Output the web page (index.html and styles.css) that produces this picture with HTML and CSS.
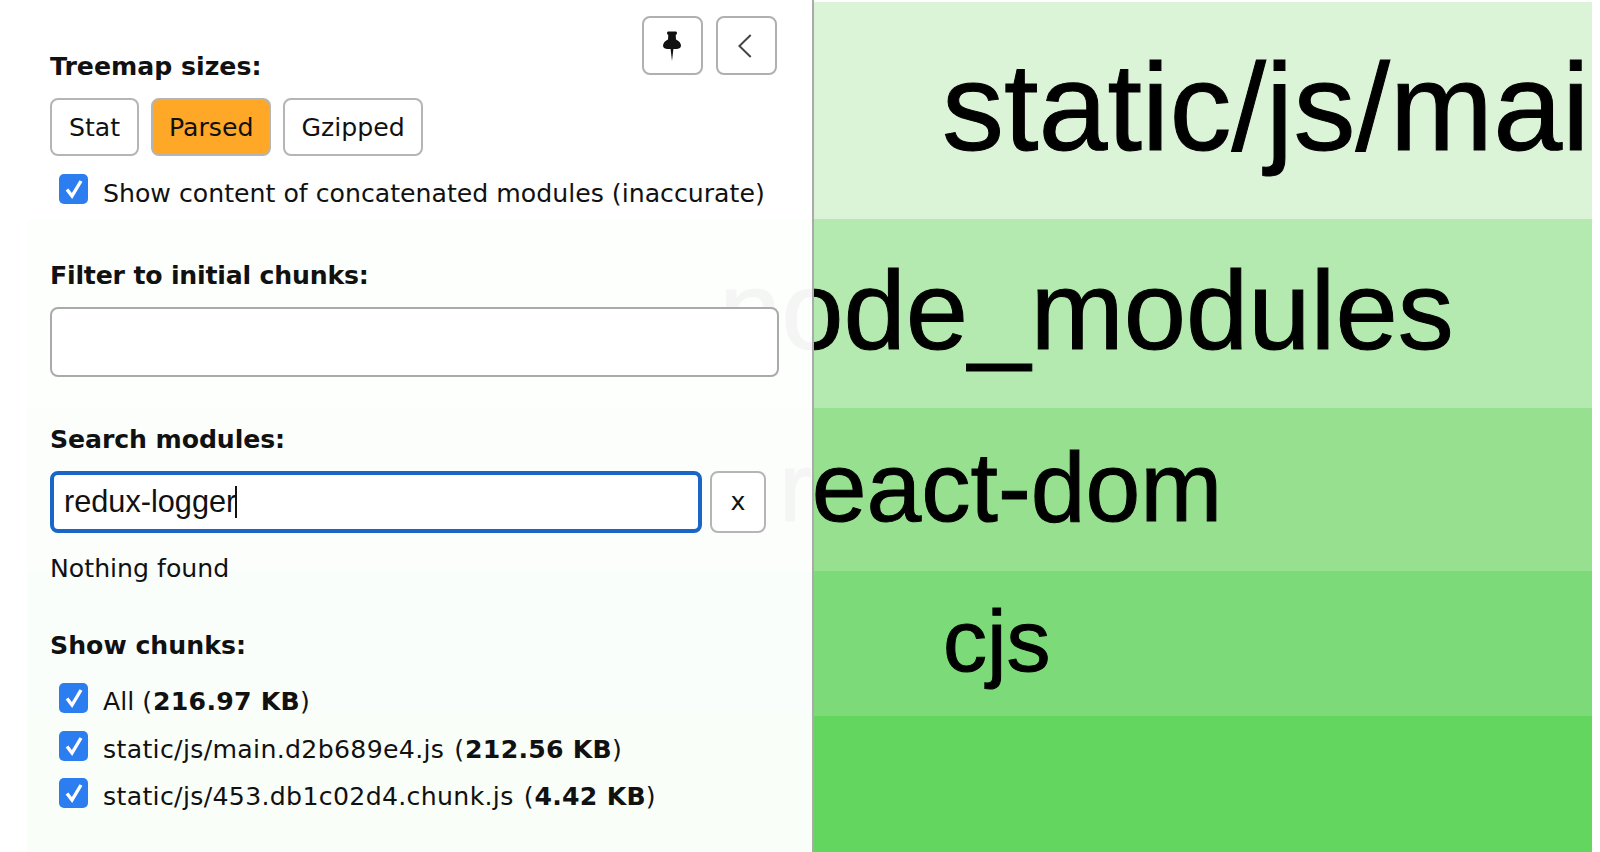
FILE: index.html
```html
<!DOCTYPE html>
<html lang="en">
<head>
<meta charset="utf-8">
<title>Webpack Bundle Analyzer</title>
<link rel="stylesheet" href="styles.css">
</head>
<body>
<main class="treemap">
  <div class="cell cell-1"><span>static/js/mai</span></div>
  <div class="cell cell-2"><span>node_modules</span></div>
  <div class="cell cell-3"><span>react-dom</span></div>
  <div class="cell cell-4"><span>cjs</span></div>
  <div class="cell cell-5"></div>
</main>
<aside class="sidebar">
  <div class="tools">
    <button class="tool" type="button" aria-label="Pin">
      <svg class="pin" width="18" height="30" viewBox="0 0 18 30"><path d="M5 0.5 H13 Q14 0.5 14 2 Q14 3.6 12.7 4 L13 8.5 Q17.6 10.5 18 14.5 Q18 17.5 14 18 H10.4 L9 30 L7.6 18 H4 Q0 17.5 0 14.5 Q0.4 10.5 5 8.5 L5.3 4 Q4 3.6 4 2 Q4 0.5 5 0.5 Z" fill="#111"/></svg>
    </button>
    <button class="tool" type="button" aria-label="Collapse">
      <svg class="back" width="14" height="24" viewBox="0 0 14 24"><path d="M12.7 1 L1.4 12 L12.7 23" fill="none" stroke="#444" stroke-width="2"/></svg>
    </button>
  </div>

  <div class="label">Treemap sizes:</div>
  <div class="switcher">
    <button class="btn stat" type="button">Stat</button>
    <button class="btn active" type="button">Parsed</button>
    <button class="btn" type="button">Gzipped</button>
  </div>
  <div class="check-row concat">
    <span class="check"><svg width="20" height="22" viewBox="0 0 20 22"><path d="M3 11.5 L8 18 L17 3" fill="none" stroke="#fff" stroke-width="3.4"/></svg></span>
    <span>Show content of concatenated modules (inaccurate)</span>
  </div>

  <div class="label filter-label">Filter to initial chunks:</div>
  <div class="field filter"></div>

  <div class="label search-label">Search modules:</div>
  <div class="search">
    <div class="field focused"><span>redux-logger</span><i class="caret"></i></div>
    <button class="btn clear" type="button">x</button>
  </div>
  <div class="note">Nothing found</div>

  <div class="label chunks-label">Show chunks:</div>
  <div class="check-row first">
    <span class="check"><svg width="20" height="22" viewBox="0 0 20 22"><path d="M3 11.5 L8 18 L17 3" fill="none" stroke="#fff" stroke-width="3.4"/></svg></span>
    <span>All (<b>216.97 KB</b>)</span>
  </div>
  <div class="check-row">
    <span class="check"><svg width="20" height="22" viewBox="0 0 20 22"><path d="M3 11.5 L8 18 L17 3" fill="none" stroke="#fff" stroke-width="3.4"/></svg></span>
    <span><span class="name">static/js/main.d2b689e4.js</span> (<b>212.56 KB</b>)</span>
  </div>
  <div class="check-row last">
    <span class="check"><svg width="20" height="22" viewBox="0 0 20 22"><path d="M3 11.5 L8 18 L17 3" fill="none" stroke="#fff" stroke-width="3.4"/></svg></span>
    <span><span class="name">static/js/453.db1c02d4.chunk.js</span> (<b>4.42 KB</b>)</span>
  </div>
</aside>
</body>
</html>
```

FILE: styles.css
```css
* { box-sizing: border-box; }
html, body { margin: 0; height: 100%; background: #fff; overflow: hidden; }
body { color: #111; font-family: "DejaVu Sans", sans-serif; font-size: 25.2px; line-height: 30px; }

.treemap {
  height: 852px;
  padding: 2px 8px 0 27px;
  display: flex;
  flex-direction: column;
  font-family: "Liberation Sans", Arial, sans-serif;
  color: #000;
  -webkit-text-stroke: 1px #000;
}
.cell { overflow: hidden; white-space: nowrap; }
.cell-1 { height: 217px; background: #dbf3d7; padding-left: 915px; font-size: 124px; line-height: 210px; }
.cell-2 { height: 189px; background: #b4eab0; padding-left: 692px; font-size: 112px; line-height: 184px; }
.cell-3 { height: 163px; background: #96e08f; padding-left: 752px; font-size: 98.5px; line-height: 158px; }
.cell-4 { height: 145px; background: #7cdb78; padding-left: 916px; font-size: 88px; line-height: 140px; }
.cell-5 { flex: 1; background: #62d65f; }

.sidebar {
  position: absolute;
  left: 0;
  top: 0;
  width: 814px;
  height: 852px;
  padding: 52px 0 0 50px;
  background: rgba(255, 255, 255, 0.96);
  border-right: 2px solid #aaa;
}
.tools { position: absolute; left: 642px; top: 16px; display: flex; gap: 13px; }
.tool {
  width: 61px;
  height: 59px;
  padding: 0;
  display: flex;
  align-items: center;
  justify-content: center;
  background: #fff;
  border: 2px solid #b0b0b0;
  border-radius: 8px;
}
.pin { margin-right: 2px; }
.back { margin-right: 4px; }
.label { font-weight: 700; }
.switcher { display: flex; gap: 12px; margin-top: 16px; }
.btn {
  height: 58px;
  padding: 2px 16px 0;
  font: inherit;
  color: #111;
  background: #fff;
  border: 2px solid #b5b5b5;
  border-radius: 8px;
}
.btn.stat { width: 89px; }
.btn.active { background: #ffa726; }
.check-row { display: flex; align-items: flex-start; gap: 15px; margin: 18px 0 0 9px; height: 30px; }
.check {
  flex: none;
  width: 29px;
  height: 30px;
  margin-top: -4px;
  display: flex;
  align-items: center;
  justify-content: center;
  background: #2b7df0;
  border-radius: 5px;
}
.name { letter-spacing: 0.32px; margin-right: 2px; }
b { letter-spacing: 0.25px; margin-left: 1px; }
.concat { margin-top: 23px; }
.concat .check { margin-top: -5px; }
.first { margin-top: 26px; }
.last { margin-top: 17px; }
.filter-label { margin-top: 52px; letter-spacing: -0.2px; }
.field { background: #fff; border: 2px solid #aaa; border-radius: 8px; }
.filter { width: 729px; height: 70px; margin-top: 16px; }
.search-label { margin-top: 48px; letter-spacing: -0.1px; }
.search { display: flex; gap: 8px; margin-top: 16px; }
.focused {
  width: 652px;
  height: 62px;
  padding-left: 10px;
  display: flex;
  align-items: center;
  border: 4px solid #1a66c8;
  font-family: "Liberation Sans", Arial, sans-serif;
  font-size: 30.7px;
  color: #111;
}
.caret { width: 2px; height: 32px; background: #111; margin-left: -1px; }
.clear { width: 56px; height: 62px; padding: 0; }
.note { margin-top: 21px; }
.chunks-label { margin-top: 47px; }
```
